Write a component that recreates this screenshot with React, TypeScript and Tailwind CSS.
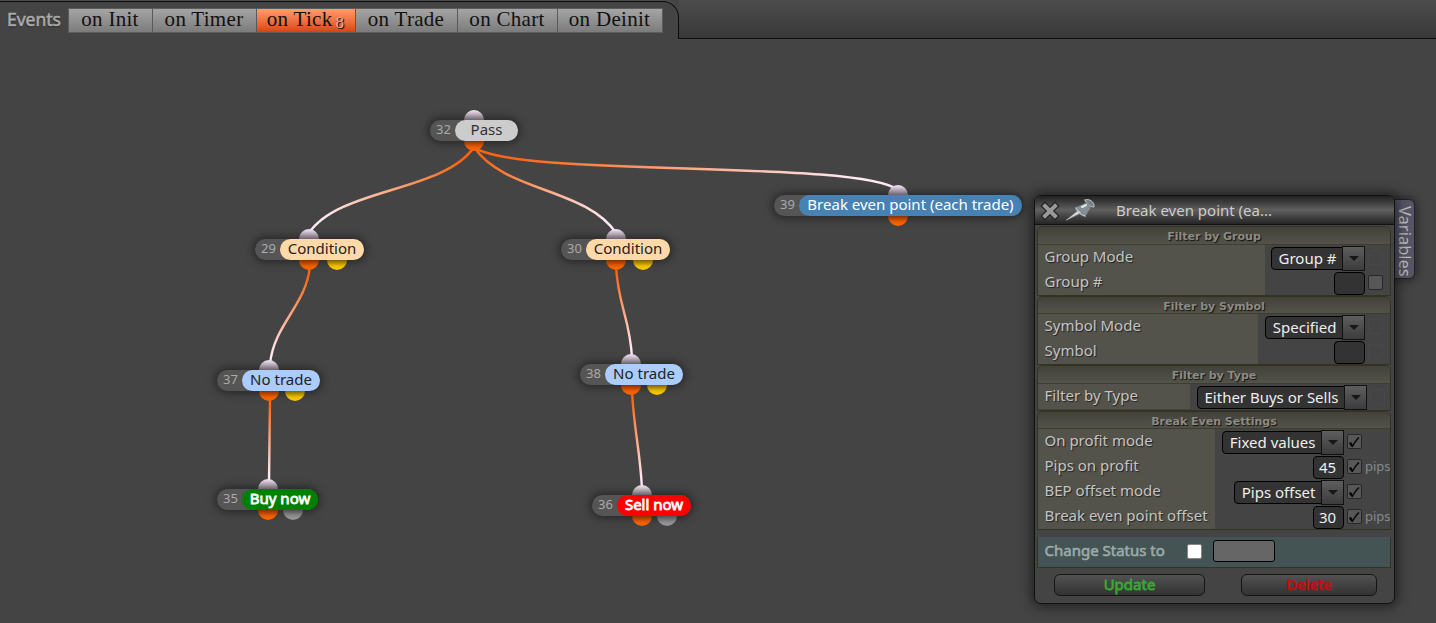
import clsx from 'clsx';

interface Port {
  x: number;
  color: 'orange' | 'yellow' | 'gray';
}

interface Block {
  id: number;
  label: string;
  x: number;
  y: number;
  width: number;
  input: number;
  outputs: Port[];
  className: string;
}

const TABS = [
  { label: 'on Init', width: 'w-[84px]' },
  { label: 'on Timer', width: 'w-[104px]' },
  { label: 'on Tick', width: 'w-[99px]', count: 8 },
  { label: 'on Trade', width: 'w-[102px]' },
  { label: 'on Chart', width: 'w-[100px]' },
  { label: 'on Deinit', width: 'w-[104px]' },
];

const BLOCKS: Block[] = [
  { id: 32, label: 'Pass', x: 430, y: 120, width: 88, input: 34, outputs: [{ x: 34, color: 'orange' }], className: 'bg-[#cccccc] text-[#333]' },
  { id: 39, label: 'Break even point (each trade)', x: 774, y: 195, width: 248, input: 114, outputs: [{ x: 114, color: 'orange' }], className: 'bg-[#4682b4] text-white' },
  { id: 29, label: 'Condition', x: 255, y: 239, width: 109, input: 44, outputs: [{ x: 44, color: 'orange' }, { x: 72, color: 'yellow' }], className: 'bg-[#ffdaa8] text-[#222]' },
  { id: 30, label: 'Condition', x: 561, y: 239, width: 109, input: 45, outputs: [{ x: 45, color: 'orange' }, { x: 72, color: 'yellow' }], className: 'bg-[#ffdaa8] text-[#222]' },
  { id: 37, label: 'No trade', x: 217, y: 370, width: 103, input: 42, outputs: [{ x: 42, color: 'orange' }, { x: 68, color: 'yellow' }], className: 'bg-[#aaccff] text-[#222]' },
  { id: 38, label: 'No trade', x: 580, y: 364, width: 103, input: 41, outputs: [{ x: 41, color: 'orange' }, { x: 67, color: 'yellow' }], className: 'bg-[#aaccff] text-[#222]' },
  { id: 35, label: 'Buy now', x: 217, y: 489, width: 101, input: 41, outputs: [{ x: 41, color: 'orange' }, { x: 66, color: 'gray' }], className: 'bg-[#008000] text-white [-webkit-text-stroke:0.8px_white]' },
  { id: 36, label: 'Sell now', x: 592, y: 495, width: 99, input: 40, outputs: [{ x: 40, color: 'orange' }, { x: 65, color: 'gray' }], className: 'bg-[#ff0000] text-white [-webkit-text-stroke:0.8px_white]' },
];

const LINKS = [
  { d: 'M474 147 C444 192 339 188 309 233', x1: 474, y1: 147, x2: 309, y2: 233 },
  { d: 'M474 147 C504 192 586 188 616 233', x1: 474, y1: 147, x2: 616, y2: 233 },
  { d: 'M474 147 C514 178 858 159 898 190', x1: 474, y1: 147, x2: 898, y2: 190 },
  { d: 'M310 266 C306 306 274 324 270 364', x1: 310, y1: 266, x2: 270, y2: 364 },
  { d: 'M616 266 C618 306 630 318 632 358', x1: 616, y1: 266, x2: 632, y2: 358 },
  { d: 'M270 397 L269 483', x1: 270, y1: 397, x2: 269, y2: 483 },
  { d: 'M632 391 C634 431 640 449 642 489', x1: 632, y1: 391, x2: 642, y2: 489 },
];

const PORT_COLORS = {
  orange: 'from-[#c94800] to-[#ff6600]',
  yellow: 'from-[#b89400] to-[#ffcc00]',
  gray: 'from-[#777777] to-[#999999]',
};

function EventTabs() {
  return (
    <header className="flex h-[39px] bg-[#444]">
      <div className="mt-px flex h-[38px] w-[679px] items-start rounded-tr-[16px] border-t border-r border-[#0c0c0c] bg-[#444] pl-[7px] pt-[6px] shadow-[0_-2px_0_#4c4c4c]">
        <span className="w-[61px] text-[17.5px] leading-[23px] text-[#aaa] [-webkit-text-stroke:0.6px_#aaa] [text-shadow:0_1px_1px_#111]">
          Events
        </span>
        <nav className="flex border border-[#5c5c5c]">
          {TABS.map((tab) => (
            <button
              key={tab.label}
              className={clsx(
                'flex h-[23px] items-center justify-center border-r border-[#5a5a5a] bg-linear-to-b pr-px pb-[2px] font-[Liberation_Serif,serif] text-[21px] leading-[21px] tracking-[0.3px] whitespace-nowrap text-[#111] last:border-r-0',
                tab.count ? 'from-[#ff9c6a] to-[#d9440c]' : 'from-[#a5a5a5] to-[#7c7c7c]',
                tab.width,
              )}
            >
              {tab.label}
              {tab.count && (
                <span className="mt-[5px] ml-[3px] text-[17px] text-[#d5b199] [text-shadow:1px_1px_1px_#000]">
                  {tab.count}
                </span>
              )}
            </button>
          ))}
        </nav>
      </div>
      <div className="flex-1 border-b border-[#0c0c0c] bg-linear-to-b from-[#4c4c4c] to-[#393939]" />
    </header>
  );
}

function Connections() {
  return (
    <svg className="absolute inset-0" width="1436" height="623" fill="none">
      <defs>
        {LINKS.map((link, i) => (
          <linearGradient key={i} id={`link-${i}`} gradientUnits="userSpaceOnUse" x1={link.x1} y1={link.y1} x2={link.x2} y2={link.y2}>
            <stop offset="0.1" stopColor="#ff6611" />
            <stop offset="0.9" stopColor="#ffe9f3" />
          </linearGradient>
        ))}
      </defs>
      {LINKS.map((link, i) => (
        <path key={i} d={link.d} stroke={`url(#link-${i})`} strokeWidth="2.4" />
      ))}
    </svg>
  );
}

function BlockNode({ block }: { block: Block }) {
  return (
    <div className="absolute h-[21px]" style={{ left: block.x, top: block.y, width: block.width }}>
      <span
        className="absolute -top-[10px] h-[20px] w-[20px] rounded-full bg-linear-to-b from-[#f8e8f8] to-[#8a808a] to-60%"
        style={{ left: block.input }}
      />
      {block.outputs.map((port) => (
        <span
          key={port.x}
          className={clsx('absolute top-[11px] h-[20px] w-[20px] rounded-full bg-linear-to-b from-50% to-80%', PORT_COLORS[port.color])}
          style={{ left: port.x }}
        />
      ))}
      <div className="relative flex h-full rounded-full bg-[#555] shadow-[0_0_8px_2px_rgba(0,0,0,0.45)]">
        <span className="w-[25px] pl-[6px] text-[13px] leading-[19px] text-[#aaa]">{block.id}</span>
        <span className={clsx('flex-1 rounded-full text-center text-[15px] leading-[19px] whitespace-nowrap', block.className)}>
          {block.label}
        </span>
      </div>
    </div>
  );
}

interface RowProps {
  label: string;
  value?: string;
  select?: boolean;
  check?: 'faint' | 'off' | 'on';
  unit?: string;
  labelWidth: string;
  tail: string;
}

function Row({ label, value, select, check, unit, labelWidth, tail }: RowProps) {
  return (
    <div className="flex h-[25px]">
      <div className={clsx('shrink-0 bg-[#53534b] pl-[6.5px] text-[15px] leading-[22px] whitespace-nowrap text-[#c4c4c4] [text-shadow:1px_1px_1px_#222]', labelWidth)}>
        {label}
      </div>
      <div className="flex min-w-0 flex-1 items-center justify-end">
        {select ? (
          <div className="flex items-center pt-px">
            <span className="h-[23px] rounded-l-[4px] border border-black bg-[#333] pr-[5.5px] pl-[6.5px] text-[15px] leading-[20px] whitespace-nowrap text-[#eee]">
              {value}
            </span>
            <span className="-ml-px flex h-[25px] w-[23px] items-center justify-center border border-[#111] bg-linear-to-b from-[#5e5e5e] to-[#3c3c3c]">
              <span className="border-x-[5px] border-t-[5px] border-x-transparent border-t-[#171717]" />
            </span>
          </div>
        ) : (
          <span className="mt-[2px] h-[23px] w-[31px] rounded-[4px] border border-black bg-[#333] pl-[5px] text-[15px] leading-[20px] text-[#eee]">
            {value}
          </span>
        )}
        <div className={clsx('flex shrink-0 items-center pl-[3px]', tail)}>
          <span
            className={clsx(
              'flex h-[15px] w-[15px] shrink-0 items-center justify-center rounded-[2px] border',
              check === 'faint' ? 'border-[#484848]' : 'border-[#272727] bg-[#575757]',
            )}
          >
            {check === 'on' && (
              <svg width="13" height="13" viewBox="0 0 13 13" fill="none" stroke="#050505">
                <path d="M2 7.5 L4 11" strokeWidth="2.4" />
                <path d="M4 12 C6 8.5 8 5 11 2.5" strokeWidth="1.5" />
              </svg>
            )}
          </span>
          {unit && <span className="-mt-px ml-[3px] text-[13px] leading-[20px] text-[#888]">{unit}</span>}
        </div>
      </div>
    </div>
  );
}

interface SectionProps {
  title: string;
  className: string;
  titleHeight: string;
  children: React.ReactNode;
}

function Section({ title, className, titleHeight, children }: SectionProps) {
  return (
    <section className={clsx('overflow-hidden rounded-t-[6px] border border-[#333322]', className)}>
      <h3
        className={clsx(
          'border-b border-[#3d3f2c] bg-linear-to-b from-[#42423b] to-[#53534b] text-center font-[DejaVu_Sans,sans-serif] text-[11px] leading-[19px] font-bold text-[#8c8c84] [text-shadow:1px_1px_1px_#111]',
          titleHeight,
        )}
      >
        {title}
      </h3>
      {children}
    </section>
  );
}

function PropertiesPanel() {
  return (
    <div className="absolute top-[195px] left-[1034px] h-[409px] w-[361px] rounded-[7px] border-[1.5px] border-[#111] bg-[#444] shadow-[0_0_12px_3px_rgba(0,0,0,0.5)]">
      <div className="flex h-[29px] items-center rounded-t-[5px] border-b border-[#111] bg-linear-to-b from-[#222] via-[#606060] to-[#252525]">
        <svg className="mt-px ml-[5px]" width="20" height="20" viewBox="0 0 20 20" fill="none" strokeLinecap="square">
          <path d="M5 5 L15 15 M15 5 L5 15" stroke="#222" strokeWidth="6.4" />
          <path d="M5 5 L15 15 M15 5 L5 15" stroke="#999" strokeWidth="4" />
        </svg>
        <svg className="ml-[5px]" width="32" height="24" viewBox="0 0 32 24" strokeLinecap="round">
          <path d="M1.5 22 L14 12 L16 14.5 Z" fill="#ddd" stroke="#bbb" strokeWidth="0.6" />
          <path d="M11 10 C13 7 17 8 20 5 L26 10 C23 12 23 16 20 18 Z" fill="#858e95" />
          <path d="M11 10 C13 14 16 17 20 18" stroke="#b8c0c5" strokeWidth="1.6" fill="none" />
          <path d="M20 2 C24 0 30 4 29 9 C25 9 21 6 20 2 Z" fill="#778087" stroke="#bcc2c6" />
          <path d="M17 9 L21 7" stroke="#e2e7ea" strokeWidth="2" />
        </svg>
        <h2 className="ml-[19px] text-[15px] leading-[20px] text-[#ccc]">Break even point (ea...</h2>
      </div>
      <div className="flex flex-col pt-px pr-[3px] pl-[2px]">
        <Section title="Filter by Group" className="h-[70px]" titleHeight="h-[18px]">
          <Row label="Group Mode" value="Group #" select check="faint" labelWidth="w-[227px]" tail="w-[25px]" />
          <Row label="Group #" check="off" labelWidth="w-[227px]" tail="w-[25px]" />
        </Section>
        <Section title="Filter by Symbol" className="h-[69px]" titleHeight="h-[17px]">
          <Row label="Symbol Mode" value="Specified" select check="faint" labelWidth="w-[220px]" tail="w-[25px]" />
          <Row label="Symbol" check="faint" labelWidth="w-[220px]" tail="w-[25px]" />
        </Section>
        <Section title="Filter by Type" className="h-[46px]" titleHeight="h-[18px]">
          <Row label="Filter by Type" value="Either Buys or Sells" select check="faint" labelWidth="w-[152px]" tail="w-[23px]" />
        </Section>
        <Section title="Break Even Settings" className="h-[119px]" titleHeight="h-[17px]">
          <Row label="On profit mode" value="Fixed values" select check="on" labelWidth="w-[177px]" tail="w-[46px]" />
          <Row label="Pips on profit" value="45" check="on" unit="pips" labelWidth="w-[177px]" tail="w-[46px]" />
          <Row label="BEP offset mode" value="Pips offset" select check="on" labelWidth="w-[177px]" tail="w-[46px]" />
          <Row label="Break even point offset" value="30" check="on" unit="pips" labelWidth="w-[177px]" tail="w-[46px]" />
        </Section>
        <div className="mt-[7px] flex h-[31px] items-center border border-t-0 border-[#333322] bg-[#445353] pl-[6.5px]">
          <span className="-mt-[4px] w-[142.5px] text-[15px] leading-[20px] text-[#9aabab] [-webkit-text-stroke:0.6px_#9aabab]">
            Change Status to
          </span>
          <span className="-mt-px h-[15px] w-[15px] rounded-[2px] border border-[#888] bg-white" />
          <span className="-mt-[2px] ml-[11px] h-[22px] w-[62px] rounded-[3px] border border-black bg-[#666]" />
        </div>
      </div>
      <div className="mt-[6px] flex gap-[36px] pl-[19px] text-[15px] leading-[18px]">
        <button className="h-[22px] w-[151px] rounded-[6px] border border-[#151515] bg-linear-to-b from-[#525252] to-[#333] pb-[2px] text-[#33aa33] [-webkit-text-stroke:0.8px_#33aa33]">
          Update
        </button>
        <button className="h-[22px] w-[136px] rounded-[6px] border border-[#151515] bg-linear-to-b from-[#525252] to-[#333] pb-[2px] text-[#cc0808] [-webkit-text-stroke:0.6px_#cc0808]">
          Delete
        </button>
      </div>
    </div>
  );
}

export default function App() {
  return (
    <div className="relative h-[623px] w-[1436px] overflow-hidden bg-[#444] font-[Noto_Sans,sans-serif]">
      <EventTabs />
      <Connections />
      {BLOCKS.map((block) => (
        <BlockNode key={block.id} block={block} />
      ))}
      <div className="absolute top-[199px] left-[1392px] flex h-[80px] w-[23px] items-center justify-center rounded-r-[6px] border border-[#222] bg-[#555566] pt-[4px] pl-[2px] text-[16.5px] leading-[20px] text-[#bbb] shadow-[0_0_8px_2px_rgba(0,0,0,0.4)] [writing-mode:vertical-rl]">
        Variables
      </div>
      <PropertiesPanel />
    </div>
  );
}
